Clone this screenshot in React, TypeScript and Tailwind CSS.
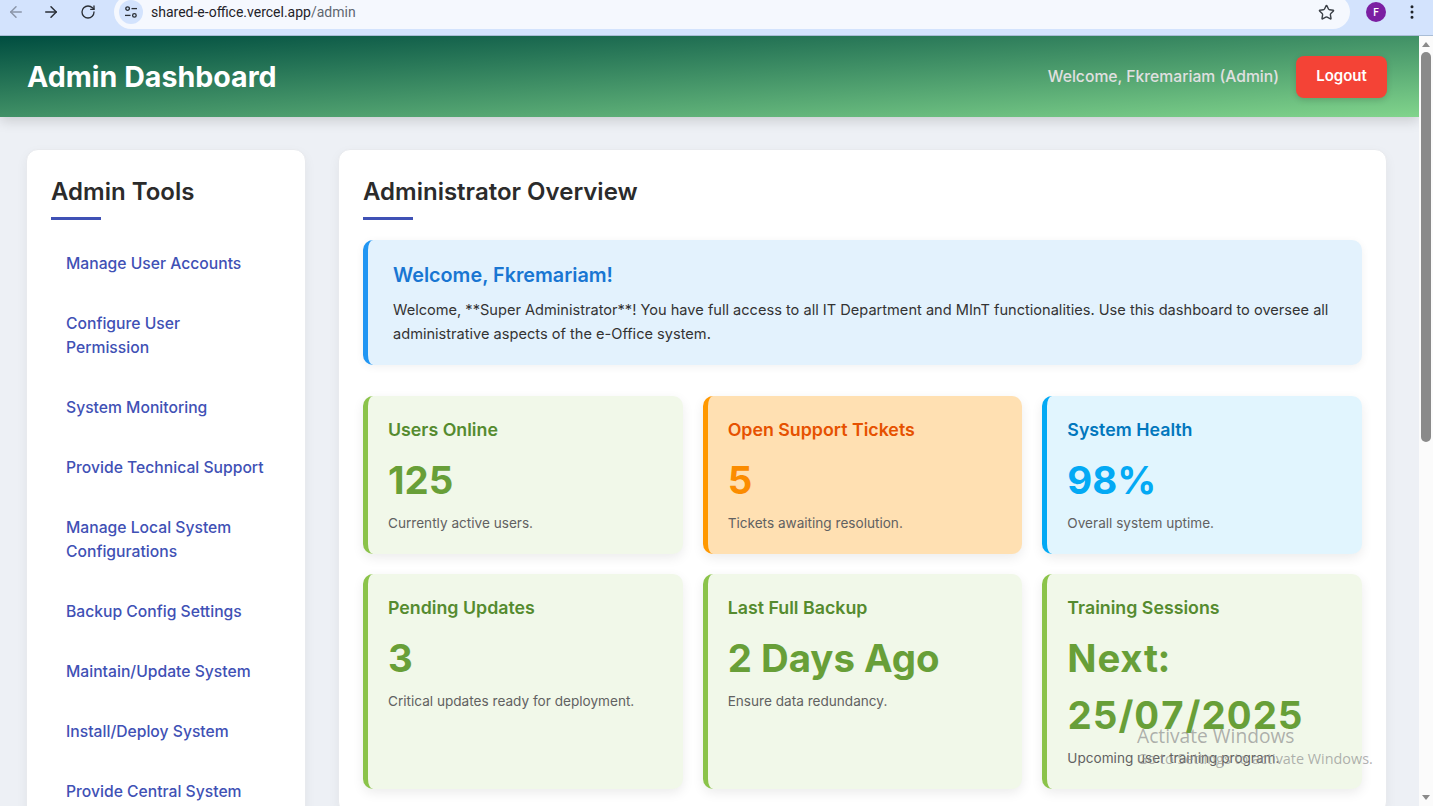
import { ArrowLeft, ArrowRight, EllipsisVertical, RotateCw, Star } from "lucide-react";

const tools = [
  "Manage User Accounts",
  "Configure User Permission",
  "System Monitoring",
  "Provide Technical Support",
  "Manage Local System Configurations",
  "Backup Config Settings",
  "Maintain/Update System",
  "Install/Deploy System",
  "Provide Central System",
];

type Stat = {
  title: string;
  value: string;
  note: string;
  box: string;
  titleColor: string;
  valueColor: string;
};

const green = {
  box: "bg-[#f1f8e9] border-[#8bc34a]",
  titleColor: "text-[#558b2f]",
  valueColor: "text-[#689f38]",
};

const stats: Stat[] = [
  { title: "Users Online", value: "125", note: "Currently active users.", ...green },
  {
    title: "Open Support Tickets",
    value: "5",
    note: "Tickets awaiting resolution.",
    box: "bg-[#ffe0b2] border-[#ff9800]",
    titleColor: "text-[#e65100]",
    valueColor: "text-[#fb8c00]",
  },
  {
    title: "System Health",
    value: "98%",
    note: "Overall system uptime.",
    box: "bg-[#e1f5fe] border-[#03a9f4]",
    titleColor: "text-[#0277bd]",
    valueColor: "text-[#03a9f4]",
  },
  { title: "Pending Updates", value: "3", note: "Critical updates ready for deployment.", ...green },
  { title: "Last Full Backup", value: "2 Days Ago", note: "Ensure data redundancy.", ...green },
  {
    title: "Training Sessions",
    value: "Next: 25/07/2025",
    note: "Upcoming user training program.",
    ...green,
    valueColor: "text-[#689f38] tabular-nums tracking-[0.8px]",
  },
];

function BrowserBar() {
  return (
    <div className="h-9 shrink-0 bg-[#d3e3fd] flex items-center pb-[11px] font-['Roboto',sans-serif] border-b border-[#a9bdd6]">
      <ArrowLeft className="ml-[7px] h-[18px] w-[18px] text-[#8b95a8]" />
      <ArrowRight className="ml-[17px] h-[18px] w-[18px] text-[#2a2f36]" />
      <RotateCw className="ml-[20px] h-[16px] w-[16px] text-[#2a2f36]" />
      <div className="ml-[18px] h-[34px] w-[1236px] shrink-0 rounded-[18px] bg-[#f5f8fe] flex items-center pl-[5px] pr-[15px]">
        <div className="h-6 w-6 rounded-full bg-[#d3e3fd] flex items-center justify-center">
          <svg width="14" height="14" viewBox="0 0 14 14" fill="none" stroke="#2a2f36" strokeWidth="1.3">
            <circle cx="3.6" cy="3.6" r="1.8" />
            <path d="M7.5 3.6H13" />
            <circle cx="10.4" cy="10.4" r="1.8" />
            <path d="M1 10.4H6.5" />
          </svg>
        </div>
        <span className="ml-2 text-[14px] text-[#1f2329]">
          shared-e-office.vercel.app<span className="text-[#5f6670]">/admin</span>
        </span>
        <Star className="ml-auto h-[17px] w-[17px] text-[#3c4148]" />
      </div>
      <div className="ml-[16px] h-5 w-5 rounded-full bg-[#7b1fa2] text-white text-[10px] font-medium flex items-center justify-center">
        F
      </div>
      <EllipsisVertical className="ml-[17px] h-[18px] w-[18px] text-[#1f2329]" />
    </div>
  );
}

function Scrollbar() {
  return (
    <div className="w-[14px] shrink-0 bg-[#fbfbfb] flex flex-col items-center">
      <div className="mt-[6px] h-0 w-0 border-x-[4px] border-b-[5px] border-x-transparent border-b-[#8a8a8a]" />
      <div className="mt-[5px] h-[390px] w-[10px] rounded-[5px] bg-[#8a8a8a]" />
      <div className="mt-auto mb-[6px] h-0 w-0 border-x-[4px] border-t-[5px] border-x-transparent border-t-[#8a8a8a]" />
    </div>
  );
}

function StatCard({ stat }: { stat: Stat }) {
  return (
    <div className={`rounded-[10px] border-l-[5px] px-5 pt-5 pb-5 shadow-[0_4px_12px_rgba(0,0,0,0.08)] ${stat.box}`}>
      <h3 className={`text-[17.8px] leading-[28px] font-semibold ${stat.titleColor}`}>{stat.title}</h3>
      <p className={`mt-[8px] text-[38.4px] leading-[57px] font-bold ${stat.valueColor}`}>{stat.value}</p>
      <p className="mt-[3px] text-[13.6px] leading-[22px] text-[#616161]">{stat.note}</p>
    </div>
  );
}

export default function App() {
  return (
    <div className="relative h-[806px] w-full overflow-hidden flex flex-col bg-[#edf0f5] font-['Inter',sans-serif]">
      <BrowserBar />
      <div className="flex-1 min-h-0 flex">
        <div className="flex-1 min-w-0 overflow-hidden">
          <header className="h-[81px] pl-[27px] pr-8 flex items-center bg-[linear-gradient(to_bottom_right,#004d40,#81d48c)] shadow-[0_4px_12px_rgba(0,0,0,0.15)]">
            <h1 className="mt-[2px] text-[28.6px] font-bold text-white">Admin Dashboard</h1>
            <span className="ml-auto text-[15.7px] font-medium text-[#e0e0e0]">Welcome, Fkremariam (Admin)</span>
            <button className="ml-[17px] h-[42px] w-[91px] rounded-lg bg-[#f44336] text-white text-[15px] font-semibold shadow-[0_2px_6px_rgba(0,0,0,0.15)]">
              Logout
            </button>
          </header>

          <div className="pl-[26px] pr-[32px] pt-[32px] flex gap-[32px] items-start">
            <aside className="w-[280px] shrink-0 rounded-xl bg-white border border-[#e8eaee] p-6 shadow-[0_4px_12px_rgba(0,0,0,0.05)]">
              <h2 className="text-[24px] leading-[36px] font-semibold text-[#2b2b2b]">Admin Tools</h2>
              <div className="mt-[7px] h-[3px] w-[50px] bg-[#3f51b5]" />
              <ul className="mt-[20px] flex flex-col gap-[12px]">
                {tools.map((t) => (
                  <li key={t} className="pl-[15px] pr-[16px] py-[12px] text-[15.7px] leading-[24px] font-medium text-[#3f51b5]">
                    {t}
                  </li>
                ))}
              </ul>
            </aside>

            <main className="flex-1 min-w-0 rounded-xl bg-white border border-[#e8eaee] p-6 shadow-[0_4px_12px_rgba(0,0,0,0.05)]">
              <h2 className="text-[24px] leading-[36px] font-semibold text-[#2b2b2b]">Administrator Overview</h2>
              <div className="mt-[7px] h-[3px] w-[50px] bg-[#3f51b5]" />
              <section className="mt-[20px] rounded-[10px] border-l-[5px] border-[#2196f3] bg-[#e3f2fd] pl-[25px] pr-6 pt-[20px] pb-[19px] shadow-[0_2px_8px_rgba(0,0,0,0.06)]">
                <h3 className="text-[19.8px] leading-[30px] font-semibold text-[#1976d2]">Welcome, Fkremariam!</h3>
                <p className="mt-[8px] text-[14.6px] leading-[24px] text-[#333]">
                  Welcome, **Super Administrator**! You have full access to all IT Department and MInT functionalities.
                  Use this dashboard to oversee all administrative aspects of the e-Office system.
                </p>
              </section>
              <div className="mt-[31px] grid grid-cols-3 gap-5">
                {stats.map((s) => (
                  <StatCard key={s.title} stat={s} />
                ))}
              </div>
            </main>
          </div>
        </div>
        <Scrollbar />
      </div>

      <div className="absolute left-[1137px] top-[724px] font-['Open_Sans',sans-serif] text-[#8f8f8f]/70 pointer-events-none">
        <p className="text-[19.2px] leading-[24px]">Activate Windows</p>
        <p className="mt-[1px] text-[14.4px] leading-[20px] whitespace-nowrap">Go to Settings to activate Windows.</p>
      </div>
    </div>
  );
}
